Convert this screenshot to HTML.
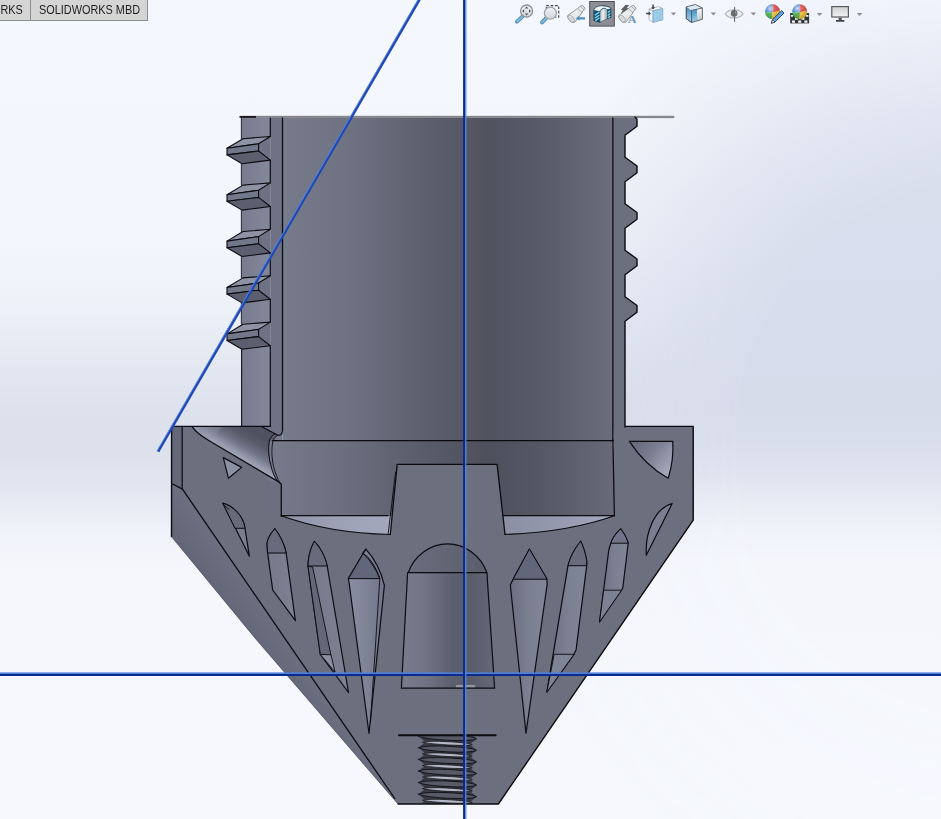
<!DOCTYPE html>
<html lang="en">
<head>
<meta charset="utf-8">
<title>SOLIDWORKS section view</title>
<style>
html,body{margin:0;padding:0;background:#f4f7fe;}
body{width:941px;height:819px;overflow:hidden;position:relative;font-family:"Liberation Sans",sans-serif;}
#vp{position:absolute;left:0;top:0;width:941px;height:819px;display:block;}
.tabs{position:absolute;left:0;top:0;width:148px;height:21px;box-sizing:border-box;background:#d5d5d5;border-right:1px solid #8e8e8e;border-bottom:1px solid #8e8e8e;font-size:12.6px;color:#1e1e1e;overflow:hidden;}
.tabs .sep{position:absolute;left:30px;top:0;width:1px;height:21px;background:#8e8e8e;}
.tabs span{position:absolute;top:0;line-height:20px;white-space:nowrap;transform-origin:left center;transform:scaleX(0.865);}
.tabs .a{left:-7.7px;}
.tabs .b{left:39px;}
</style>
</head>
<body>
<svg id="vp" width="941" height="819" viewBox="0 0 941 819">
<defs>
<linearGradient id="bgL" gradientUnits="userSpaceOnUse" x1="0" y1="0" x2="0" y2="819"><stop offset="0" stop-color="#f4f7fe"/><stop offset="0.3" stop-color="#f3f6fc"/><stop offset="0.38" stop-color="#ecf0f8"/><stop offset="0.45" stop-color="#e3e7f1"/><stop offset="0.513" stop-color="#dde1ec"/><stop offset="0.55" stop-color="#dde1ec"/><stop offset="0.6" stop-color="#e4e7f1"/><stop offset="0.647" stop-color="#f0f2f9"/><stop offset="0.7" stop-color="#f5f7fc"/><stop offset="1" stop-color="#f6f8fd"/></linearGradient>
<linearGradient id="bgR" gradientUnits="userSpaceOnUse" x1="0" y1="0" x2="0" y2="819"><stop offset="0" stop-color="#e6eaf4"/><stop offset="0.06" stop-color="#dfe4f0"/><stop offset="0.14" stop-color="#dae0ed"/><stop offset="0.24" stop-color="#d8deec"/><stop offset="0.37" stop-color="#d7ddec"/><stop offset="0.5" stop-color="#d7dceb"/><stop offset="0.54" stop-color="#d9deec"/><stop offset="0.574" stop-color="#dfe3ef"/><stop offset="0.61" stop-color="#e8ebf4"/><stop offset="0.647" stop-color="#f0f2f9"/><stop offset="0.685" stop-color="#f4f6fc"/><stop offset="1" stop-color="#f6f8fd"/></linearGradient>
<radialGradient id="bgMaskG" gradientUnits="userSpaceOnUse" cx="1000" cy="440" r="520"><stop offset="0" stop-color="#fff" stop-opacity="1"/><stop offset="0.5" stop-color="#fff" stop-opacity="1"/><stop offset="0.65" stop-color="#fff" stop-opacity="0.75"/><stop offset="0.8" stop-color="#fff" stop-opacity="0.42"/><stop offset="0.9" stop-color="#fff" stop-opacity="0.2"/><stop offset="1" stop-color="#fff" stop-opacity="0"/></radialGradient>
<mask id="bgMask"><rect width="941" height="819" fill="url(#bgMaskG)"/></mask>
<linearGradient id="bore" gradientUnits="userSpaceOnUse" x1="282.5" y1="0" x2="613" y2="0"><stop offset="0" stop-color="#767b8b"/><stop offset="0.2" stop-color="#6e7282"/><stop offset="0.45" stop-color="#5b5e6c"/><stop offset="0.62" stop-color="#51535f"/><stop offset="0.78" stop-color="#585a68"/><stop offset="1" stop-color="#6b6d7c"/></linearGradient>
<linearGradient id="bore2" gradientUnits="userSpaceOnUse" x1="281" y1="0" x2="614" y2="0"><stop offset="0" stop-color="#747889"/><stop offset="0.2" stop-color="#6a6e7e"/><stop offset="0.45" stop-color="#575a68"/><stop offset="0.62" stop-color="#4e505c"/><stop offset="0.78" stop-color="#555765"/><stop offset="1" stop-color="#686a79"/></linearGradient>
<linearGradient id="tbody" gradientUnits="userSpaceOnUse" x1="241" y1="0" x2="270" y2="0"><stop offset="0" stop-color="#777b8d"/><stop offset="1" stop-color="#84889b"/></linearGradient>
<linearGradient id="stepL" gradientUnits="userSpaceOnUse" x1="281" y1="0" x2="392" y2="0"><stop offset="0" stop-color="#8f94a8"/><stop offset="0.5" stop-color="#9ca1b6"/><stop offset="1" stop-color="#a3a8bd"/></linearGradient>
<linearGradient id="stepR" gradientUnits="userSpaceOnUse" x1="503" y1="0" x2="614" y2="0"><stop offset="0" stop-color="#8a8fa3"/><stop offset="0.5" stop-color="#9499ad"/><stop offset="1" stop-color="#a5aabf"/></linearGradient>
<linearGradient id="fillet" gradientUnits="userSpaceOnUse" x1="241" y1="460.5" x2="256.3" y2="434.7"><stop offset="0" stop-color="#a6aabc"/><stop offset="0.18" stop-color="#9498ab"/><stop offset="0.42" stop-color="#72768a"/><stop offset="0.75" stop-color="#575a68"/><stop offset="1" stop-color="#50535f"/></linearGradient>
<linearGradient id="dome" gradientUnits="userSpaceOnUse" x1="408" y1="0" x2="487" y2="0"><stop offset="0" stop-color="#6a6d7d"/><stop offset="1" stop-color="#5a5d6b"/></linearGradient>
<linearGradient id="coneL" gradientUnits="userSpaceOnUse" x1="250" y1="590" x2="225" y2="608"><stop offset="0" stop-color="#6b6f80"/><stop offset="1" stop-color="#626676"/></linearGradient>
<linearGradient id="cpocket" gradientUnits="userSpaceOnUse" x1="401" y1="0" x2="495" y2="0"><stop offset="0" stop-color="#787c8d"/><stop offset="0.25" stop-color="#707485"/><stop offset="0.55" stop-color="#5c5f6d"/><stop offset="0.75" stop-color="#595c69"/><stop offset="1" stop-color="#656877"/></linearGradient>
<linearGradient id="pk" gradientUnits="objectBoundingBox" x1="0" y1="0" x2="1" y2="0"><stop offset="0" stop-color="#757989"/><stop offset="1" stop-color="#7d8193"/></linearGradient>
<linearGradient id="pk4" gradientUnits="objectBoundingBox" x1="0" y1="0" x2="1" y2="0"><stop offset="0" stop-color="#8b8fa3"/><stop offset="0.6" stop-color="#7c8093"/><stop offset="1" stop-color="#70748a"/></linearGradient>
<linearGradient id="pkr" gradientUnits="objectBoundingBox" x1="0" y1="0" x2="1" y2="0"><stop offset="0" stop-color="#6b6f80"/><stop offset="0.5" stop-color="#7b7f92"/><stop offset="1" stop-color="#828699"/></linearGradient>
<linearGradient id="tri" gradientUnits="userSpaceOnUse" x1="632" y1="443" x2="668" y2="470"><stop offset="0" stop-color="#656879"/><stop offset="0.5" stop-color="#7b7f91"/><stop offset="1" stop-color="#a2a6b8"/></linearGradient>
<clipPath id="thrclip"><rect x="410" y="736.3" width="80" height="67.2"/></clipPath>
<linearGradient id="glass" gradientUnits="objectBoundingBox" x1="0" y1="0" x2="0" y2="1"><stop offset="0" stop-color="#f4f6f8"/><stop offset="1" stop-color="#cfd3d8"/></linearGradient>
<linearGradient id="hndl" gradientUnits="objectBoundingBox" x1="0" y1="0" x2="1" y2="1"><stop offset="0" stop-color="#8cc4e0"/><stop offset="1" stop-color="#4a90b8"/></linearGradient>
<linearGradient id="cubeL" gradientUnits="objectBoundingBox" x1="0" y1="0" x2="0" y2="1"><stop offset="0" stop-color="#3f8fc4"/><stop offset="1" stop-color="#a8d4ec"/></linearGradient>
<linearGradient id="cubeR" gradientUnits="objectBoundingBox" x1="0" y1="0" x2="0" y2="1"><stop offset="0" stop-color="#fafafa"/><stop offset="1" stop-color="#c4c8cc"/></linearGradient>
<linearGradient id="mon" gradientUnits="objectBoundingBox" x1="0" y1="0" x2="0" y2="1"><stop offset="0" stop-color="#cfd0d2"/><stop offset="1" stop-color="#f2f2f3"/></linearGradient>
<radialGradient id="ballhi" cx="0.35" cy="0.3" r="0.7"><stop offset="0" stop-color="#fff" stop-opacity="0.75"/><stop offset="0.45" stop-color="#fff" stop-opacity="0.1"/><stop offset="1" stop-color="#000" stop-opacity="0.18"/></radialGradient>
<clipPath id="ball1"><circle cx="772.6" cy="11.7" r="7.5"/></clipPath>
<clipPath id="ball2"><circle cx="799.7" cy="11.7" r="7.5"/></clipPath>
<linearGradient id="scopeG" gradientUnits="objectBoundingBox" x1="0" y1="0" x2="1" y2="1"><stop offset="0" stop-color="#fbfbfb"/><stop offset="0.6" stop-color="#e6e7e9"/><stop offset="1" stop-color="#c9cbce"/></linearGradient>
<linearGradient id="secbore" gradientUnits="userSpaceOnUse" x1="600.2" y1="0" x2="607" y2="0"><stop offset="0" stop-color="#b4b8bd"/><stop offset="0.4" stop-color="#f2f2f2"/><stop offset="1" stop-color="#9ea2a8"/></linearGradient>
</defs>
<rect width="941" height="819" fill="url(#bgL)"/>
<rect width="941" height="819" fill="url(#bgR)" mask="url(#bgMask)"/>
<g id="model">
<polygon points="241.2,117.0 270.3,117.0 270.3,426.4 241.2,426.4" fill="url(#tbody)" />
<polygon points="270.3,117.0 282.5,117.0 282.5,441.0 270.3,441.0" fill="#6e7284" />
<polygon points="282.5,117.0 613.2,117.0 613.2,441.0 282.5,441.0" fill="url(#bore)" />
<polygon points="281.3,440.6 613.3,440.6 614.4,516.0 281.3,516.0" fill="url(#bore2)" />
<polygon points="613.0,117.0 635.0,117.0 637.0,119.2 637.0,126.3 625.0,135.2 625.0,157.3 637.0,166.0 637.0,172.8 625.0,181.7 625.0,203.8 637.0,212.5 637.0,219.3 625.0,228.2 625.0,250.3 637.0,259.0 637.0,265.8 625.0,274.7 625.0,296.8 637.0,305.5 637.0,312.3 625.0,321.2 625.0,427.0 613.0,427.0" fill="#6c6f7e" />
<polygon points="171.6,426.4 271.0,426.4 271.0,441.0 281.3,441.0 281.3,516.0 614.4,516.0 613.2,426.4 625.0,426.4 693.3,426.4 693.5,520.1 498.4,804.0 398.0,804.0 256.9,640.3 171.4,536.6" fill="#6c6f7e" />
<polygon points="268.0,432.0 282.0,432.0 282.0,485.0 268.0,480.0" fill="#757989" />
<polygon points="270.3,420.0 282.5,420.0 282.5,434.0 270.3,431.0" fill="#6e7284" />
<polygon points="397.2,464.4 497.1,464.4 505.0,534.5 390.2,534.5" fill="#6c6f7e" />
<polygon points="171.6,426.4 182.2,426.4 182.2,489.2 171.6,483.5" fill="#636777" />
<polygon points="171.6,483.5 182.5,489.2 394.8,798.5 398.0,804.0 256.9,640.3 171.4,536.6" fill="url(#coneL)" />
<path d="M281.3,515.7 L391.7,515.7 L390.3,534.5 C352,533.5 315,528 281.3,515.7 Z" fill="url(#stepL)" />
<path d="M502.9,515.7 L614.3,515.7 C580,528 545,533 505,534.4 Z" fill="url(#stepR)" />
<path d="M192,426.6 L262,426.8 L275,433.8 C272,435.5 270,438 269.3,441 C268,448 268.6,458 271,466 C272.5,472 274.5,477 277.3,481.1 L208.4,440.2 C202,436.5 196,432 192,426.6 Z" fill="url(#fillet)" />
<path d="M192,426.6 L222,426.8 C218,432 214,437 208.4,440.2 C202,436.5 196,432 192,426.6 Z" fill="#8f93a6" opacity="0.35"/>
<polygon points="262.0,426.6 282.5,426.6 282.5,431.0 279.5,435.0 275.0,433.8" fill="#6e7284" />
<path d="M275,433.8 C272,435.5 270,438 269.3,441 L273,441 C273.5,438.5 275.5,436.5 278,435.2 Z" fill="#5b5e6c" />
<polygon points="270.3,136.5 258.6,143.8 258.6,151.0 270.3,160.1" fill="#6e7284" />
<polygon points="243.0,138.7 270.3,136.5 258.6,143.8 227.0,148.3" fill="#8e92a5" stroke="#0b0b10" stroke-width="1.1" stroke-linejoin="round" />
<polygon points="227.0,148.3 258.6,143.8 258.6,151.0 227.0,154.9" fill="#73778a" stroke="#0b0b10" stroke-width="1.1" stroke-linejoin="round" />
<polygon points="227.0,154.9 258.6,151.0 270.3,160.1 242.0,163.7" fill="#5c5f6f" stroke="#0b0b10" stroke-width="1.1" stroke-linejoin="round" />
<polygon points="270.3,182.9 258.6,190.2 258.6,197.4 270.3,206.5" fill="#6e7284" />
<polygon points="243.0,185.1 270.3,182.9 258.6,190.2 227.0,194.7" fill="#8e92a5" stroke="#0b0b10" stroke-width="1.1" stroke-linejoin="round" />
<polygon points="227.0,194.7 258.6,190.2 258.6,197.4 227.0,201.3" fill="#73778a" stroke="#0b0b10" stroke-width="1.1" stroke-linejoin="round" />
<polygon points="227.0,201.3 258.6,197.4 270.3,206.5 242.0,210.1" fill="#5c5f6f" stroke="#0b0b10" stroke-width="1.1" stroke-linejoin="round" />
<polygon points="270.3,229.3 258.6,236.6 258.6,243.8 270.3,252.9" fill="#6e7284" />
<polygon points="243.0,231.5 270.3,229.3 258.6,236.6 227.0,241.1" fill="#8e92a5" stroke="#0b0b10" stroke-width="1.1" stroke-linejoin="round" />
<polygon points="227.0,241.1 258.6,236.6 258.6,243.8 227.0,247.7" fill="#73778a" stroke="#0b0b10" stroke-width="1.1" stroke-linejoin="round" />
<polygon points="227.0,247.7 258.6,243.8 270.3,252.9 242.0,256.5" fill="#5c5f6f" stroke="#0b0b10" stroke-width="1.1" stroke-linejoin="round" />
<polygon points="270.3,275.7 258.6,283.0 258.6,290.2 270.3,299.3" fill="#6e7284" />
<polygon points="243.0,277.9 270.3,275.7 258.6,283.0 227.0,287.5" fill="#8e92a5" stroke="#0b0b10" stroke-width="1.1" stroke-linejoin="round" />
<polygon points="227.0,287.5 258.6,283.0 258.6,290.2 227.0,294.1" fill="#73778a" stroke="#0b0b10" stroke-width="1.1" stroke-linejoin="round" />
<polygon points="227.0,294.1 258.6,290.2 270.3,299.3 242.0,302.9" fill="#5c5f6f" stroke="#0b0b10" stroke-width="1.1" stroke-linejoin="round" />
<polygon points="270.3,322.1 258.6,329.4 258.6,336.6 270.3,345.7" fill="#6e7284" />
<polygon points="243.0,324.3 270.3,322.1 258.6,329.4 227.0,333.9" fill="#8e92a5" stroke="#0b0b10" stroke-width="1.1" stroke-linejoin="round" />
<polygon points="227.0,333.9 258.6,329.4 258.6,336.6 227.0,340.5" fill="#73778a" stroke="#0b0b10" stroke-width="1.1" stroke-linejoin="round" />
<polygon points="227.0,340.5 258.6,336.6 270.3,345.7 242.0,349.3" fill="#5c5f6f" stroke="#0b0b10" stroke-width="1.1" stroke-linejoin="round" />
<polygon points="223.3,457.6 241.7,467.4 228.4,478.2" fill="#8d91a4" stroke="#0b0b10" stroke-width="1.2" stroke-linejoin="round" />
<path d="M629.3,441.4 L672.8,441.4 C673.5,455 671.5,468 668.2,478.2 C653,470 640,457.5 629.3,441.4 Z" fill="url(#tri)" stroke="#0b0b10" stroke-width="1.2" stroke-linejoin="round" stroke-linecap="round" />
<path d="M672.2,503.5 C655,508 645,532 646.3,555.2 Z" fill="#7a7e90" stroke="#0b0b10" stroke-width="1.2" stroke-linejoin="round" stroke-linecap="round" />
<path d="M223,503.2 C233,506 243.5,516 245,528.3 L249.4,556.3 Z" fill="#797d8f" stroke="#0b0b10" stroke-width="1.2" stroke-linejoin="round" stroke-linecap="round" />
<path d="M223,503.2 C233,506 243.5,516 245,528.3 L235.3,528.3 Z" fill="#666a7b" stroke="#0b0b10" stroke-width="1.0" stroke-linejoin="round" stroke-linecap="round" />
<line x1="224.5" y1="505.5" x2="229.0" y2="509.5" stroke="#0b0b10" stroke-width="0.9" stroke-linecap="round" />
<path d="M274.8,528.9 C271,533 267.3,539 267,544 L267.6,553 L272.7,590 L295.4,620.7 L286.1,552.7 C285,546 280,535 274.8,528.9 Z" fill="url(#pk)" stroke="#0b0b10" stroke-width="1.2" stroke-linejoin="round" stroke-linecap="round" />
<path d="M274.8,528.9 C271,533 267.3,539 267,544 L267.6,553 L286.1,553 C285,546 280,535 274.8,528.9 Z" fill="#676b7c" stroke="#0b0b10" stroke-width="1.0" stroke-linejoin="round" stroke-linecap="round" />
<path d="M314.4,541.5 C311,547 308.2,556 308,566 L320.3,654.4 L348.5,692.5 L327.2,566 C325.5,557 320,547 314.4,541.5 Z" fill="url(#pk)" stroke="#0b0b10" stroke-width="1.2" stroke-linejoin="round" stroke-linecap="round" />
<path d="M314.4,541.5 C311,547 308.2,556 308,566 L327.2,566 C325.5,557 320,547 314.4,541.5 Z" fill="#676b7c" stroke="#0b0b10" stroke-width="1.0" stroke-linejoin="round" stroke-linecap="round" />
<polygon points="308.0,566.0 312.6,567.0 331.0,655.5 320.3,654.4" fill="#636778" stroke="#0b0b10" stroke-width="0.9" stroke-linejoin="round" />
<polygon points="320.3,654.4 331.0,654.8 335.0,672.0" fill="#8b8fa2" stroke="#0b0b10" stroke-width="0.9" stroke-linejoin="round" />
<path d="M365.8,549.1 L348.4,578.3 L349,582 L369,733.5 L384.4,585.3 C381,571 374,558 365.8,549.1 Z" fill="url(#pk4)" stroke="#0b0b10" stroke-width="1.2" stroke-linejoin="round" stroke-linecap="round" />
<path d="M365.8,549.1 L348.4,578.6 L379.8,578.6 C376,567 369,556 363,553.5 Z" fill="#62667a" stroke="#0b0b10" stroke-width="1.0" stroke-linejoin="round" stroke-linecap="round" />
<path d="M363,553.3 C370,560 376,569 379.8,578.8 L370.5,722" fill="none" stroke="#0b0b10" stroke-width="0.9" stroke-linejoin="round" stroke-linecap="round" />
<path d="M408.3,572.6 C414,556 430,543.8 447.6,543.8 C465,543.8 481,556 486.9,572.6 Z" fill="url(#dome)" stroke="#0b0b10" stroke-width="1.2" stroke-linejoin="round" stroke-linecap="round" />
<polygon points="407.6,572.6 486.9,572.6 494.6,688.2 401.4,688.2" fill="url(#cpocket)" stroke="#0b0b10" stroke-width="1.2" stroke-linejoin="round" />
<rect x="456" y="685" width="19" height="2.2" fill="#93959f"/>
<path d="M529.3,549.2 L513.2,579 L510.3,585 L526,733.2 L547.2,584 L546.8,579 Z" fill="url(#pkr)" stroke="#0b0b10" stroke-width="1.2" stroke-linejoin="round" stroke-linecap="round" />
<path d="M529.3,549.2 L513.2,579.2 L546.8,579.2 Z" fill="#62667a" stroke="#0b0b10" stroke-width="1.0" stroke-linejoin="round" stroke-linecap="round" />
<path d="M580.8,541.3 C575,548 570,557 568,565.7 L546.8,692.2 L574,654.3 L576.1,649.7 L586.7,565.7 L586.7,560.4 C585.5,553 583,546 580.8,541.3 Z" fill="url(#pkr)" stroke="#0b0b10" stroke-width="1.2" stroke-linejoin="round" stroke-linecap="round" />
<path d="M580.8,541.3 C575,548 570,557 568,565.7 L586.7,565.7 L586.7,560.4 C585.5,553 583,546 580.8,541.3 Z" fill="#676b7c" stroke="#0b0b10" stroke-width="1.0" stroke-linejoin="round" stroke-linecap="round" />
<polygon points="554.2,654.3 574.0,654.3 546.8,692.2" fill="#7f8396" stroke="#0b0b10" stroke-width="0.9" stroke-linejoin="round" />
<path d="M620.7,528.9 C616,533 612.5,538 610.9,543 L608.8,550 L599.5,622 L621.6,590 L622.8,588 L628.2,543 C626.5,537.5 624,533 620.7,528.9 Z" fill="url(#pkr)" stroke="#0b0b10" stroke-width="1.2" stroke-linejoin="round" stroke-linecap="round" />
<path d="M620.7,528.9 C616,533 612.5,538 610.9,543.2 L628.2,543.2 C626.5,537.5 624,533 620.7,528.9 Z" fill="#70748a" stroke="#0b0b10" stroke-width="1.0" stroke-linejoin="round" stroke-linecap="round" />
<polygon points="603.7,590.2 621.6,590.2 599.5,622.0" fill="#7d8194" stroke="#0b0b10" stroke-width="0.9" stroke-linejoin="round" />
<polygon points="418.6,724.6 425.4,730.4 418.6,736.2 425.4,742.0 418.6,747.8 425.4,753.6 418.6,759.4 425.4,765.2 418.6,771.0 425.4,776.8 418.6,782.6 425.4,788.4 418.6,794.2 425.4,800.0 418.6,805.8 425.4,811.6 418.6,817.4 425.4,823.2 469.8,825.7 476.6,819.9 469.8,814.1 476.6,808.3 469.8,802.5 476.6,796.7 469.8,790.9 476.6,785.1 469.8,779.3 476.6,773.5 469.8,767.7 476.6,761.9 469.8,756.1 476.6,750.3 469.8,744.5 476.6,738.7 469.8,732.9 476.6,727.1" fill="#383943" clip-path="url(#thrclip)"/>
<path d="M418.6,736.2 C423.6,732.6 470.6,734.8 476.6,738.7 C471.6,742.3 424.6,740.1 418.6,736.2 Z" fill="#585a67" stroke="#08080c" stroke-width="0.8" stroke-linejoin="round" stroke-linecap="round" clip-path="url(#thrclip)"/>
<path d="M422.9,742.2 C429.4,740.0 464.8,742.1 472.3,744.6 C465.8,746.5 430.4,744.4 422.9,742.2 Z" fill="#b4b8c6" stroke="#08080c" stroke-width="0.7" stroke-linejoin="round" stroke-linecap="round" clip-path="url(#thrclip)"/>
<path d="M418.6,747.8 C423.6,744.2 470.6,746.4 476.6,750.3 C471.6,753.9 424.6,751.7 418.6,747.8 Z" fill="#585a67" stroke="#08080c" stroke-width="0.8" stroke-linejoin="round" stroke-linecap="round" clip-path="url(#thrclip)"/>
<path d="M422.9,753.8 C429.4,751.6 464.8,753.7 472.3,756.2 C465.8,758.1 430.4,756.0 422.9,753.8 Z" fill="#b4b8c6" stroke="#08080c" stroke-width="0.7" stroke-linejoin="round" stroke-linecap="round" clip-path="url(#thrclip)"/>
<path d="M418.6,759.4 C423.6,755.8 470.6,758.0 476.6,761.9 C471.6,765.5 424.6,763.3 418.6,759.4 Z" fill="#585a67" stroke="#08080c" stroke-width="0.8" stroke-linejoin="round" stroke-linecap="round" clip-path="url(#thrclip)"/>
<path d="M422.9,765.4 C429.4,763.2 464.8,765.3 472.3,767.8 C465.8,769.7 430.4,767.6 422.9,765.4 Z" fill="#b4b8c6" stroke="#08080c" stroke-width="0.7" stroke-linejoin="round" stroke-linecap="round" clip-path="url(#thrclip)"/>
<path d="M418.6,771.0 C423.6,767.4 470.6,769.6 476.6,773.5 C471.6,777.1 424.6,774.9 418.6,771.0 Z" fill="#585a67" stroke="#08080c" stroke-width="0.8" stroke-linejoin="round" stroke-linecap="round" clip-path="url(#thrclip)"/>
<path d="M422.9,777.0 C429.4,774.8 464.8,776.9 472.3,779.4 C465.8,781.3 430.4,779.2 422.9,777.0 Z" fill="#b4b8c6" stroke="#08080c" stroke-width="0.7" stroke-linejoin="round" stroke-linecap="round" clip-path="url(#thrclip)"/>
<path d="M418.6,782.6 C423.6,779.0 470.6,781.2 476.6,785.1 C471.6,788.7 424.6,786.5 418.6,782.6 Z" fill="#585a67" stroke="#08080c" stroke-width="0.8" stroke-linejoin="round" stroke-linecap="round" clip-path="url(#thrclip)"/>
<path d="M422.9,788.6 C429.4,786.4 464.8,788.5 472.3,791.0 C465.8,792.9 430.4,790.8 422.9,788.6 Z" fill="#b4b8c6" stroke="#08080c" stroke-width="0.7" stroke-linejoin="round" stroke-linecap="round" clip-path="url(#thrclip)"/>
<path d="M418.6,794.2 C423.6,790.6 470.6,792.8 476.6,796.7 C471.6,800.3 424.6,798.1 418.6,794.2 Z" fill="#585a67" stroke="#08080c" stroke-width="0.8" stroke-linejoin="round" stroke-linecap="round" clip-path="url(#thrclip)"/>
<path d="M422.9,800.2 C429.4,798.0 464.8,800.1 472.3,802.6 C465.8,804.5 430.4,802.4 422.9,800.2 Z" fill="#b4b8c6" stroke="#08080c" stroke-width="0.7" stroke-linejoin="round" stroke-linecap="round" clip-path="url(#thrclip)"/>
<path d="M418.6,805.8 C423.6,802.2 470.6,804.4 476.6,808.3 C471.6,811.9 424.6,809.7 418.6,805.8 Z" fill="#585a67" stroke="#08080c" stroke-width="0.8" stroke-linejoin="round" stroke-linecap="round" clip-path="url(#thrclip)"/>
<path d="M422.9,811.8 C429.4,809.6 464.8,811.7 472.3,814.2 C465.8,816.1 430.4,814.0 422.9,811.8 Z" fill="#b4b8c6" stroke="#08080c" stroke-width="0.7" stroke-linejoin="round" stroke-linecap="round" clip-path="url(#thrclip)"/>
<line x1="399.0" y1="735.3" x2="495.6" y2="735.3" stroke="#0b0b10" stroke-width="2.0" stroke-linecap="round" />
</g>
<g id="edges" fill="none" stroke="#0b0b10" stroke-width="1.2" stroke-linecap="round" stroke-linejoin="round">
<rect x="241" y="115.8" width="433.3" height="2.3" fill="#86878c" stroke="none"/>
<rect x="239.5" y="116" width="16.5" height="1.8" fill="#15151a" stroke="none"/>
<line x1="241.4" y1="118.0" x2="241.4" y2="138.7" stroke="#33353f" stroke-width="1.1" stroke-linecap="round" />
<line x1="270.3" y1="118.0" x2="270.3" y2="136.5" stroke="#0b0b10" stroke-width="1.2" stroke-linecap="round" />
<line x1="241.4" y1="163.7" x2="241.4" y2="185.1" stroke="#33353f" stroke-width="1.1" stroke-linecap="round" />
<line x1="270.3" y1="160.1" x2="270.3" y2="182.9" stroke="#0b0b10" stroke-width="1.2" stroke-linecap="round" />
<line x1="241.4" y1="210.1" x2="241.4" y2="231.5" stroke="#33353f" stroke-width="1.1" stroke-linecap="round" />
<line x1="270.3" y1="206.5" x2="270.3" y2="229.3" stroke="#0b0b10" stroke-width="1.2" stroke-linecap="round" />
<line x1="241.4" y1="256.5" x2="241.4" y2="277.9" stroke="#33353f" stroke-width="1.1" stroke-linecap="round" />
<line x1="270.3" y1="252.9" x2="270.3" y2="275.7" stroke="#0b0b10" stroke-width="1.2" stroke-linecap="round" />
<line x1="241.4" y1="302.9" x2="241.4" y2="324.3" stroke="#33353f" stroke-width="1.1" stroke-linecap="round" />
<line x1="270.3" y1="299.3" x2="270.3" y2="322.1" stroke="#0b0b10" stroke-width="1.2" stroke-linecap="round" />
<line x1="241.6" y1="349.3" x2="241.6" y2="426.0" stroke="#1c1d24" stroke-width="1.2" stroke-linecap="round" />
<line x1="270.3" y1="345.7" x2="270.3" y2="426.5" stroke="#0b0b10" stroke-width="1.2" stroke-linecap="round" />
<line x1="282.5" y1="118.0" x2="282.5" y2="430.0" stroke="#0b0b10" stroke-width="1.3" stroke-linecap="round" />
<line x1="612.9" y1="118.0" x2="612.9" y2="440.0" stroke="#0b0b10" stroke-width="1.3" stroke-linecap="round" />
<path d="M612.9,440 L614.4,516" fill="none" stroke="#0b0b10" stroke-width="1.3" stroke-linejoin="round" stroke-linecap="round" />
<line x1="272.5" y1="440.7" x2="613.3" y2="440.7" stroke="#0b0b10" stroke-width="1.2" stroke-linecap="round" />
<path d="M282.5,430 C282.3,434 280.5,435.8 278,435.2 L275,433.8 L262,426.8" fill="none" stroke="#0b0b10" stroke-width="1.1" stroke-linejoin="round" stroke-linecap="round" />
<path d="M192,426.6 C196,432 202,436.5 208.4,440.2 L277.3,481.1 L281.3,484 L281.3,516" fill="none" stroke="#0b0b10" stroke-width="1.3" stroke-linejoin="round" stroke-linecap="round" />
<path d="M275,433.8 C272,435.5 270,438 269.3,441 C268,448 268.6,458 271,466 C272.5,472 274.5,477 277.3,481.1" fill="none" stroke="#0b0b10" stroke-width="1.0" stroke-linejoin="round" stroke-linecap="round" />
<path d="M278,435.2 C275.5,436.5 273.5,438.5 273,441 C271,449 271.8,461 274.5,470 C275.8,474.5 277.5,478.5 279.8,482.6" fill="none" stroke="#0b0b10" stroke-width="0.9" stroke-linejoin="round" stroke-linecap="round" />
<path d="M635.0,117.0 L637.0,119.2 L637.0,126.3 L625.0,135.2 L625.0,157.3 L637.0,166.0 L637.0,172.8 L625.0,181.7 L625.0,203.8 L637.0,212.5 L637.0,219.3 L625.0,228.2 L625.0,250.3 L637.0,259.0 L637.0,265.8 L625.0,274.7 L625.0,296.8 L637.0,305.5 L637.0,312.3 L625.0,321.2 L625.0,427.0 L625,426.4 L693.2,426.4 L693.2,520.1 L498.4,804 L398,804" fill="none" stroke="#0b0b10" stroke-width="1.4" stroke-linejoin="round" stroke-linecap="round" />
<path d="M171.5,536.6 L171.6,426.4 L270.5,426.4" fill="none" stroke="#0b0b10" stroke-width="1.4" stroke-linejoin="round" stroke-linecap="round" />
<path d="M398,804 L256.9,640.3 L171.4,536.6" fill="none" stroke="#4a4d5a" stroke-width="0.6" stroke-linejoin="round" stroke-linecap="round" />
<line x1="182.2" y1="426.4" x2="182.2" y2="489.2" stroke="#0b0b10" stroke-width="1.2" stroke-linecap="round" />
<path d="M171.6,483.5 L182.5,489.2 L394.8,798.5" fill="none" stroke="#0b0b10" stroke-width="1.3" stroke-linejoin="round" stroke-linecap="round" />
<path d="M281.3,515.7 L388.2,515.7" fill="none" stroke="#0b0b10" stroke-width="1.2" stroke-linejoin="round" stroke-linecap="round" />
<path d="M281.3,515.7 C315,528 352,533.5 390.3,534.5" fill="none" stroke="#0b0b10" stroke-width="1.2" stroke-linejoin="round" stroke-linecap="round" />
<path d="M502.9,515.7 L614.3,515.7 C580,528 545,533 505,534.4" fill="none" stroke="#0b0b10" stroke-width="1.2" stroke-linejoin="round" stroke-linecap="round" />
<path d="M390.3,534.5 L397.2,464.4 L497.1,464.4 L505,534.4" fill="none" stroke="#0b0b10" stroke-width="1.3" stroke-linejoin="round" stroke-linecap="round" />
<path d="M395.6,472 L388.2,533.5" fill="none" stroke="#0b0b10" stroke-width="0.9" stroke-linejoin="round" stroke-linecap="round" />
</g>
<g id="reflines">
<line x1="419.4" y1="-0.5" x2="158.0" y2="451.6" stroke="#2048b4" stroke-width="2.8"/>
<line x1="418.4" y1="-1" x2="157.0" y2="451.1" stroke="#6a96e6" stroke-width="0.8"/>
<rect x="0" y="672.4" width="941" height="1.7" fill="#4f80dc"/>
<rect x="0" y="674" width="941" height="2" fill="#0c2a8a"/>
<rect x="463.1" y="0" width="2.2" height="819" fill="#0c2a8a"/>
<rect x="465.2" y="0" width="1.2" height="819" fill="#5a8ae0"/>
</g>
<g id="toolbar">
<line x1="522.6" y1="16.4" x2="517" y2="21.6" stroke="#3f7fa6" stroke-width="3.8" stroke-linecap="round"/>
<line x1="522.6" y1="16.4" x2="517" y2="21.6" stroke="#7cbcdc" stroke-width="2.2" stroke-linecap="round"/>
<circle cx="526.6" cy="11" r="6" fill="url(#glass)" stroke="#8f9296" stroke-width="1.3"/>
<path d="M526.6,6.6 l1.7,2 h-3.4 z M526.6,15.4 l1.7,-2 h-3.4 z M522.2,11 l2,-1.7 v3.4 z M531,11 l-2,-1.7 v3.4 z" fill="#4a4c50"/>
<rect x="546.3" y="5.6" width="12.4" height="11.6" fill="none" stroke="#3c3d40" stroke-width="1.1" stroke-dasharray="2.6 1.8"/>
<line x1="546.2" y1="18.2" x2="542" y2="22.4" stroke="#3f7fa6" stroke-width="3.8" stroke-linecap="round"/>
<line x1="546.2" y1="18.2" x2="542" y2="22.4" stroke="#7cbcdc" stroke-width="2.2" stroke-linecap="round"/>
<circle cx="550.4" cy="13.2" r="6" fill="url(#glass)" stroke="#a0a3a8" stroke-width="1.2"/>
<g transform="translate(0.0,0)">
<path d="M567.6,15.6 L577.7,8.4 L580.3,6.3 L582.5,5.2 L585.2,8.6 L582.6,11 L582,12.8 L575,22 C573.6,23 571.6,22.6 570,21 C568.4,19.4 567.4,17.2 567.6,15.6 Z" fill="url(#scopeG)" stroke="#96989c" stroke-width="1" stroke-linejoin="round"/>
<path d="M577.7,8.4 L582,12.8 M580.3,6.3 L584.2,10" stroke="#96989c" stroke-width="0.8" fill="none"/>
<ellipse cx="571.2" cy="18.6" rx="2.3" ry="4.0" transform="rotate(-40 571.2 18.6)" fill="#e3e4e6" stroke="#a4a6aa" stroke-width="0.9"/>
<ellipse cx="571.2" cy="18.6" rx="1.0" ry="2.2" transform="rotate(-40 571.2 18.6)" fill="#d2d4d7"/>
</g>
<path d="M585,17.2 h-5.6 v-1.4 l-3.6,2.5 l3.6,2.5 v-1.4 h5.6 z" fill="#4f93c4"/>
<rect x="589.7" y="1.5" width="24.6" height="24.6" fill="#8d8e94" stroke="#505158" stroke-width="1"/>
<path d="M593.9,10.4 C594.5,6.5 600,5.6 603,5.9 C607,6.2 610.5,7.2 610.9,8.8 L610.9,17.4 L607,18.7 C605,19.6 601.5,20.6 600.2,22.3 L593.9,20.4 Z" fill="#0e5676" stroke="#0a3a52" stroke-width="0.8" stroke-linejoin="round"/>
<path d="M600.2,11.6 C601.5,8.4 606,8.2 607,9.8 L607,18.7 C605,19.6 601.5,20.6 600.2,22.3 Z" fill="url(#secbore)"/>
<path d="M593.9,10.4 C594.5,6.5 600,5.6 603,5.9 C607,6.2 610.5,7.2 610.9,8.8 L607,9.8 C606,7.6 601,7.4 600.2,11.6 Z" fill="#eef2f5" stroke="#0a3a52" stroke-width="0.5"/>
<path d="M594.8,15.2 l4.6,-3.2 M594.8,18.2 l4.6,-3.2 M595.4,20.6 l4,-2.8 M607.7,12.6 l2.6,-1.9 M607.7,15.4 l2.6,-1.9 M607.9,17.8 l2.4,-1.7" stroke="#8fd6f0" stroke-width="1.3" fill="none"/>
<g transform="translate(51.0,0)">
<path d="M567.6,15.6 L577.7,8.4 L580.3,6.3 L582.5,5.2 L585.2,8.6 L582.6,11 L582,12.8 L575,22 C573.6,23 571.6,22.6 570,21 C568.4,19.4 567.4,17.2 567.6,15.6 Z" fill="url(#scopeG)" stroke="#96989c" stroke-width="1" stroke-linejoin="round"/>
<path d="M577.7,8.4 L582,12.8 M580.3,6.3 L584.2,10" stroke="#96989c" stroke-width="0.8" fill="none"/>
<ellipse cx="571.2" cy="18.6" rx="2.3" ry="4.0" transform="rotate(-40 571.2 18.6)" fill="#e3e4e6" stroke="#a4a6aa" stroke-width="0.9"/>
<ellipse cx="571.2" cy="18.6" rx="1.0" ry="2.2" transform="rotate(-40 571.2 18.6)" fill="#d2d4d7"/>
</g>
<polygon points="625.4,5.1 629.2,5.1 626.6,8.3 629,8.3 620.7,13.8 622.8,10 620.9,10" fill="#5c5e62"/>
<text transform="translate(627.7,23) scale(1.15,1)" font-family="'Liberation Serif',serif" font-size="10.6" font-weight="bold" fill="#6699ba">A</text>
<path d="M649,9 L653,10.8 L653,22.4 L649,19.6 Z" fill="#f2f6fa" stroke="#9aa0a6" stroke-width="0.7"/>
<path d="M649,9 L658.6,6.6 L662.8,8.6 L653,10.8 Z" fill="#f6f9fc" stroke="#9aa0a6" stroke-width="0.7"/>
<path d="M653,10.8 L662.8,8.6 L662.8,19.8 L653,22.4 Z" fill="#9ccbe8" stroke="#6fa6c8" stroke-width="0.7"/>
<path d="M652.4,4.6 h1.4 v2.6 h1.3 l-2,2.2 l-2,-2.2 h1.3 z" fill="#3c3d40"/>
<path d="M646.2,12.8 h2.6 v-1.3 l2.2,2 l-2.2,2 v-1.3 h-2.6 z" fill="#3c3d40"/>
<polygon points="670.7,12.4 676.3,12.4 673.5,15.4" fill="#8c8d90"/>
<path d="M686.3,6.9 L691.6,10.4 L691.6,22.5 L686.3,18.6 Z" fill="url(#cubeL)" stroke="#4e5a66" stroke-width="0.9" stroke-linejoin="round"/>
<path d="M691.6,10.4 L697,9.2 L697,21.2 L691.6,22.5 Z" fill="url(#cubeL)"/>
<path d="M697,9.2 L702.4,8 L702.4,19.2 L697,21.2 Z" fill="url(#cubeR)"/>
<path d="M686.3,6.9 L695.3,4.5 L702.4,8 L691.6,10.4 Z" fill="#dcebf5"/>
<path d="M686.3,6.9 L695.3,4.5 L702.4,8 L702.4,19.2 L691.6,22.5 L686.3,18.6 Z M691.6,10.4 L702.4,8 M691.6,10.4 L691.6,22.5" fill="none" stroke="#4e5a66" stroke-width="0.9" stroke-linejoin="round"/>
<polygon points="710.6,12.4 716.2,12.4 713.4,15.4" fill="#8c8d90"/>
<path d="M725.2,13.8 C729,8.4 739,8.4 743,13.8 C739,19.4 729,19.4 725.2,13.8 Z" fill="#eceef0" stroke="#b4b6ba" stroke-width="1.2"/>
<circle cx="734.1" cy="13.4" r="3.3" fill="#6e7074"/>
<circle cx="735.2" cy="12.4" r="1.1" fill="#a8aaae"/>
<line x1="734.6" y1="7" x2="734.6" y2="21.8" stroke="#606266" stroke-width="1"/>
<polygon points="750.6,12.4 756.2,12.4 753.4,15.4" fill="#8c8d90"/>
<g clip-path="url(#ball1)">
<rect x="764.6" y="3.7" width="8" height="8.6" fill="#3c7cd6"/>
<rect x="772.6" y="3.7" width="8" height="8.6" fill="#d84848"/>
<path d="M764.6,12.3 h8 l-1,8 h-7 z" fill="#48ae4a"/>
<path d="M772.6,12.3 L780.6,10.2 L780.6,19.7 L771.6,19.7 z" fill="#ecc23c"/>
<circle cx="772.6" cy="11.7" r="7.6" fill="url(#ballhi)"/>
</g>
<path d="M781.6,10.6 L784,13 L775,22 L771.4,23.2 L772.6,19.6 Z" fill="#5aa2e2" stroke="#2f3c50" stroke-width="0.9" stroke-linejoin="round"/>
<path d="M772.6,19.6 L775,22 L771.4,23.2 Z" fill="#f0e6d0" stroke="#2f3c50" stroke-width="0.7"/>
<rect x="790.2" y="13" width="18.9" height="10.4" fill="#333438"/>
<path d="M792,20.4 h3 v2.4 h-3 z M798.2,20.4 h3 v2.4 h-3 z M804.4,20.4 h3 v2.4 h-3 z M795,17.4 h3 v2.4 h-3 z M801.4,17.4 h3 v2.4 h-3 z M791,15 h2 v1.8 h-2 z M806,15 h2.4 v1.8 h-2.4 z" fill="#f4f4f4"/>
<g clip-path="url(#ball2)">
<rect x="791.7" y="3.7" width="8" height="8.6" fill="#3c7cd6"/>
<rect x="799.7" y="3.7" width="8" height="8.6" fill="#d84848"/>
<path d="M791.7,12.3 h8 l-1,8 h-7 z" fill="#48ae4a"/>
<path d="M799.7,12.3 L807.7,10.2 L807.7,19.7 L798.7,19.7 z" fill="#ecc23c"/>
<circle cx="799.7" cy="11.7" r="7.6" fill="url(#ballhi)"/>
</g>
<polygon points="816.8,12.9 822.4,12.9 819.6,15.9" fill="#8c8d90"/>
<rect x="831.8" y="6.6" width="16.6" height="10.4" fill="url(#mon)" stroke="#5a5b5f" stroke-width="1.2"/>
<rect x="838.6" y="17.6" width="3.2" height="2.6" fill="#5a5b5f"/>
<rect x="836" y="20" width="8.4" height="1.7" fill="#3c3d40"/>
<polygon points="856.8,12.9 862.4,12.9 859.6,15.9" fill="#8c8d90"/>
</g>
</svg>
<div class="tabs"><span class="a">ORKS</span><i class="sep"></i><span class="b">SOLIDWORKS MBD</span></div>
</body>
</html>
